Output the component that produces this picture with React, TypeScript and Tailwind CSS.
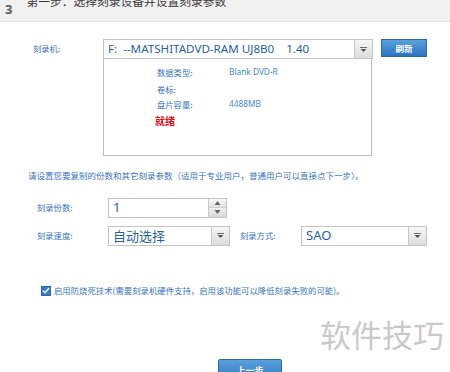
import React from 'react';

const cjk = { fontFamily: '"Noto Sans CJK SC", "Noto Sans", sans-serif' };
const latin = { fontFamily: '"Noto Sans", "Noto Sans CJK SC", sans-serif' };

// small dropdown arrow button used by all the selects
const ArrowBtn: React.FC = () => (
  <div className="w-[18px] h-full flex items-center justify-center border-l border-[#c8c8c8] bg-gradient-to-b from-[#f6f6f6] to-[#dcdcdc]">
    <svg width="7" height="5" viewBox="0 0 7 5">
      <rect x="0" y="0" width="7" height="1" fill="#6b6b6b" />
      <path d="M0.5 2 L6.5 2 L3.5 5 Z" fill="#555" />
    </svg>
  </div>
);

const Select: React.FC<{ value: string; width: string; font?: React.CSSProperties; size?: string }> = ({ value, width, font, size }) => (
  <div className={`${width} h-[20px] flex items-stretch border border-[#c4c4c4] bg-white`}>
    <div className={`flex-1 flex items-center pl-[4px] ${size || 'text-[13px]'} text-[#2a5f9e] leading-none whitespace-pre`} style={font || cjk}>
      {value}
    </div>
    <ArrowBtn />
  </div>
);

export default function App() {
  return (
    <div className="relative w-[450px] h-[372px] overflow-hidden bg-white" style={cjk}>
      {/* step header, cut off at the top */}
      <div className="h-[22px] bg-[#f1f1f1] border-b border-[#dedede] flex items-start overflow-hidden">
        <span className="ml-[5px] mt-[3px] text-[13px] font-bold text-[#5a5a5a] leading-none" style={latin}>3</span>
        <span className="ml-[14px] -mt-[5px] text-[11.75px] text-[#3a3a3a] leading-none">第一步：选择刻录设备并设置刻录参数</span>
      </div>

      {/* recorder row */}
      <div className="flex mt-[17px] pl-[33px]">
        <div className="w-[70px] pt-[5px] text-[8.3px] text-[#3b73b8] leading-none">刻录机:</div>
        <div className="flex flex-col">
          <Select width="w-[270px]" value="F:  --MATSHITADVD-RAM UJ8B0    1.40" font={latin} size="text-[11.6px]" />
          <div className="w-[269px] h-[97px] border border-t-0 border-[#bdbdbd] pl-[53px] pt-[9px] text-[8.3px] leading-none text-[#3b73b8]">
            <div className="flex h-[17px]">
              <span className="w-[72px]">数据类型:</span>
              <span className="text-[#4a86c6]" style={latin}>Blank DVD-R</span>
            </div>
            <div className="flex h-[15px]">
              <span className="w-[72px]">卷标:</span>
            </div>
            <div className="flex h-[16px]">
              <span className="w-[72px]">盘片容量:</span>
              <span className="text-[#4a86c6]" style={latin}>4488MB</span>
            </div>
            <div className="-ml-[2px] text-[10px] font-bold text-[#e0141e]">就绪</div>
          </div>
        </div>
        <button className="ml-[8px] w-[46px] h-[18px] flex items-center justify-center bg-gradient-to-b from-[#5aa0dc] to-[#2b74bd] border border-[#2a6aa8] text-white text-[8.5px] font-bold leading-none">
          刷新
        </button>
      </div>

      {/* instruction line */}
      <div className="mt-[15px] pl-[28px] text-[8.5px] text-[#3b73b8] leading-none whitespace-nowrap">
        请设置您要复制的份数和其它刻录参数（适用于专业用户，普通用户可以直接点下一步）。
      </div>

      {/* copies */}
      <div className="flex items-center mt-[18px] pl-[37px]">
        <div className="w-[71px] text-[8.3px] text-[#3b73b8] leading-none">刻录份数:</div>
        <div className="w-[119px] h-[20px] flex items-stretch border border-[#c4c4c4] bg-white">
          <div className="flex-1 flex items-center pl-[4px] text-[13px] text-[#2a5f9e] leading-none" style={latin}>1</div>
          <div className="w-[18px] flex flex-col border-l border-[#c8c8c8]">
            <div className="flex-1 flex items-center justify-center bg-gradient-to-b from-[#f8f8f8] to-[#e2e2e2] border-b border-[#cfcfcf]">
              <svg width="7" height="4" viewBox="0 0 7 4"><path d="M0.5 4 L6.5 4 L3.5 0 Z" fill="#666" /></svg>
            </div>
            <div className="flex-1 flex items-center justify-center bg-gradient-to-b from-[#eeeeee] to-[#d8d8d8]">
              <svg width="7" height="4" viewBox="0 0 7 4"><path d="M0.5 0 L6.5 0 L3.5 4 Z" fill="#666" /></svg>
            </div>
          </div>
        </div>
      </div>

      {/* speed / method */}
      <div className="flex items-center mt-[8px] pl-[37px]">
        <div className="w-[71px] text-[8.3px] text-[#3b73b8] leading-none">刻录速度:</div>
        <Select width="w-[122px]" value="自动选择" />
        <div className="ml-[10px] w-[61px] text-[8.3px] text-[#3b73b8] leading-none">刻录方式:</div>
        <Select width="w-[126px]" value="SAO" font={latin} />
      </div>

      {/* buffer underrun option */}
      <div className="flex items-center mt-[40px] pl-[41px]">
        <div className="w-[10px] h-[10px] flex items-center justify-center bg-[#3b7cc4] border border-[#2e67a6]">
          <svg width="8" height="7" viewBox="0 0 8 7">
            <path d="M0.8 3.6 L3 5.8 L7.2 1" stroke="white" strokeWidth="1.3" fill="none" />
          </svg>
        </div>
        <span className="ml-[3px] text-[8.4px] text-[#3b73b8] leading-none whitespace-nowrap">
          启用防烧死技术(需要刻录机硬件支持，启用该功能可以降低刻录失败的可能)。
        </span>
      </div>

      {/* previous step button */}
      <div className="flex mt-[63px] pl-[218px]">
        <button className="w-[64px] h-[24px] flex items-start justify-center pt-[6px] bg-gradient-to-b from-[#5aa0dc] to-[#2b74bd] border border-[#2a6aa8] rounded-[2px] text-white text-[9px] font-bold leading-none">
          上一步
        </button>
      </div>

      {/* site watermark */}
      <div className="absolute left-[320px] top-[318px] text-[31px] leading-none text-[#c9c9c9]">
        软件技巧
      </div>
    </div>
  );
}
